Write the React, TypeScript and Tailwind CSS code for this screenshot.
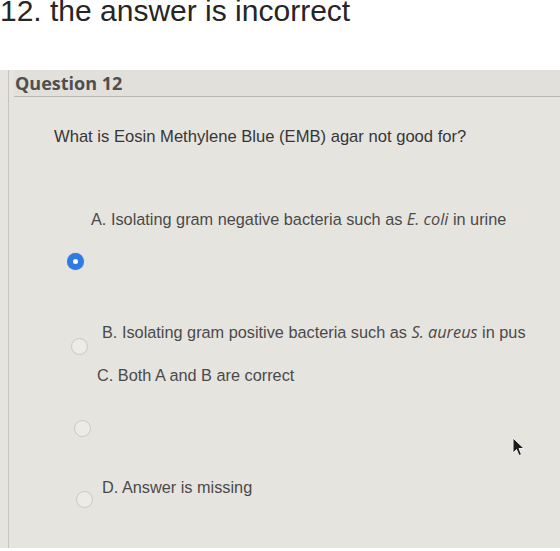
import React from 'react';

const sans = "font-['Liberation_Sans',Arial,sans-serif]";
const open = "font-['Open_Sans',sans-serif]";

function Radio({ checked, className }: { checked?: boolean; className: string }) {
  if (checked) {
    return (
      <div className={`w-[17px] h-[17px] rounded-full bg-[#2f7be6] flex items-center justify-center shadow-[0_0_1px_#7fb0f5] ${className}`}>
        <div className="w-[5px] h-[5px] rounded-full bg-white" />
      </div>
    );
  }
  return <div className={`w-[17px] h-[17px] rounded-full border border-[#c9c8c4] bg-[#ecebe7] ${className}`} />;
}

function Cursor() {
  return (
    <svg className="absolute left-[512px] top-[437px]" width="14" height="20" viewBox="0 0 14 20">
      <path d="M1 1 L1 16 L4.5 12.5 L7 18.5 L9.5 17.5 L7 11.5 L12 11.5 Z" fill="#1c1c1c" stroke="#f2f2f2" strokeWidth="1" strokeLinejoin="round" />
    </svg>
  );
}

export default function App() {
  return (
    <div className="w-[560px] h-[551px] bg-white overflow-hidden flex flex-col">
      <div className="h-[70px] shrink-0 overflow-hidden">
        <div className={`${sans} text-[30px] leading-[30px] -mt-[4px] text-[#262626] whitespace-nowrap`}>
          12. the answer is incorrect
        </div>
      </div>

      <div className="relative h-[478px] bg-[#e6e4df] pl-[8px]">
        <div className="h-full border-l border-[#c6c4bf] flex flex-col">
          <div className="ml-[5px] h-[27px] bg-[#e2e0db] border-b border-[#b9b8b4]">
            <div className={`${open} font-bold text-[18px] leading-[26px] pl-[1px] text-[#4f4f4f]`}>Question 12</div>
          </div>

          <div className={`${sans} text-[16.6px] leading-[20px] text-[#363636] ml-[45px] mt-[30px] whitespace-nowrap`}>
            What is Eosin Methylene Blue (EMB) agar not good for?
          </div>

          <div className={`${sans} text-[16.3px] leading-[20px] text-[#4a4a4a] whitespace-nowrap`}>
            <div className="ml-[82px] mt-[62px]">
              A. Isolating gram negative bacteria such as <span className={`${open} italic`}>E. coli</span> in urine
            </div>
            <Radio checked className="ml-[58px] mt-[24px]" />

            <div className="ml-[93px] mt-[52px]">
              B. Isolating gram positive bacteria such as <span className={`${open} italic`}>S. aureus</span> in pus
            </div>
            <Radio className="ml-[62px] -mt-[4px]" />

            <div className="ml-[88px] mt-[10px]">C. Both A and B are correct</div>
            <Radio className="ml-[65px] mt-[35px]" />

            <div className="ml-[93px] mt-[40px]">D. Answer is missing</div>
            <Radio className="ml-[67px] -mt-[6px]" />
          </div>
        </div>
      </div>

      <Cursor />
    </div>
  );
}
